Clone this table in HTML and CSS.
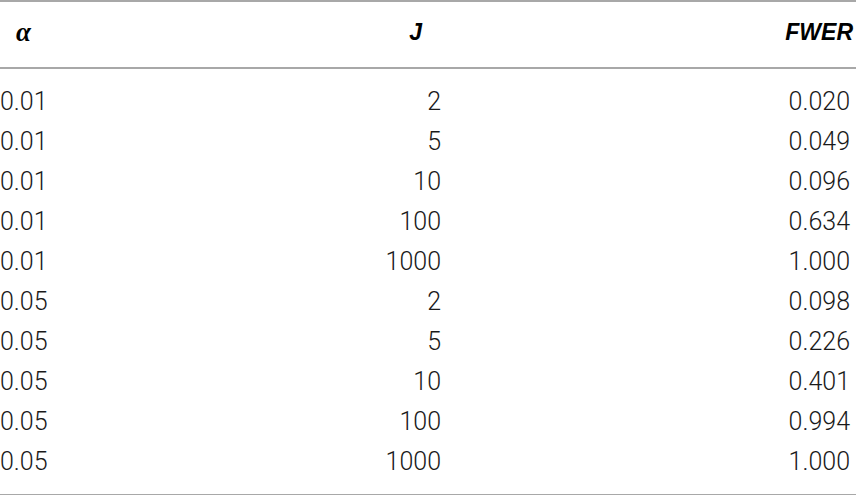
FILE: index.html
```html
<!DOCTYPE html>
<html>
<head>
<meta charset="utf-8">
<link rel="stylesheet" href="styles.css">
</head>
<body>
<div class="table">
  <div class="head">
    <div class="h h1">α</div>
    <div class="h h2">J</div>
    <div class="h h3">FWER</div>
  </div>
  <div class="body">
    <div class="row"><span class="c1">0.01</span><span class="c2">2</span><span class="c3">0.020</span></div>
    <div class="row"><span class="c1">0.01</span><span class="c2">5</span><span class="c3">0.049</span></div>
    <div class="row"><span class="c1">0.01</span><span class="c2">10</span><span class="c3">0.096</span></div>
    <div class="row"><span class="c1">0.01</span><span class="c2">100</span><span class="c3">0.634</span></div>
    <div class="row"><span class="c1">0.01</span><span class="c2">1000</span><span class="c3">1.000</span></div>
    <div class="row"><span class="c1">0.05</span><span class="c2">2</span><span class="c3">0.098</span></div>
    <div class="row"><span class="c1">0.05</span><span class="c2">5</span><span class="c3">0.226</span></div>
    <div class="row"><span class="c1">0.05</span><span class="c2">10</span><span class="c3">0.401</span></div>
    <div class="row"><span class="c1">0.05</span><span class="c2">100</span><span class="c3">0.994</span></div>
    <div class="row"><span class="c1">0.05</span><span class="c2">1000</span><span class="c3">1.000</span></div>
  </div>
</div>
</body>
</html>
```

FILE: styles.css
```css
html, body {
  margin: 0;
  padding: 0;
  background: #ffffff;
}
.table {
  width: 856px;
  border-top: 2px solid #a8a8a8;
  border-bottom: 2px solid #a8a8a8;
  color: #1a1a1a;
  font-family: Roboto, "Liberation Sans", sans-serif;
}
.head, .row {
  display: grid;
  grid-template-columns: 200px 241px 412px;
}
.head {
  height: 61px;
  padding-bottom: 4px;
  align-items: center;
  border-bottom: 2px solid #a8a8a8;
  color: #000;
}
.h {
  font-family: "Liberation Sans", Arial, sans-serif;
  font-weight: bold;
  font-style: italic;
  font-size: 23px;
  line-height: 1;
}
.h1 {
  font-family: "Liberation Serif", serif;
  font-size: 27px;
  padding-left: 16px;
}
.h2 {
  text-align: right;
  padding-right: 19px;
}
.h3 {
  text-align: right;
}
.body {
  padding: 12px 0 13px;
}
.row {
  height: 40px;
  align-items: center;
  font-size: 25px;
  font-weight: 300;
  line-height: 1;
}
.c2, .c3 {
  text-align: right;
}
.c3 {
  padding-right: 3px;
}
```
